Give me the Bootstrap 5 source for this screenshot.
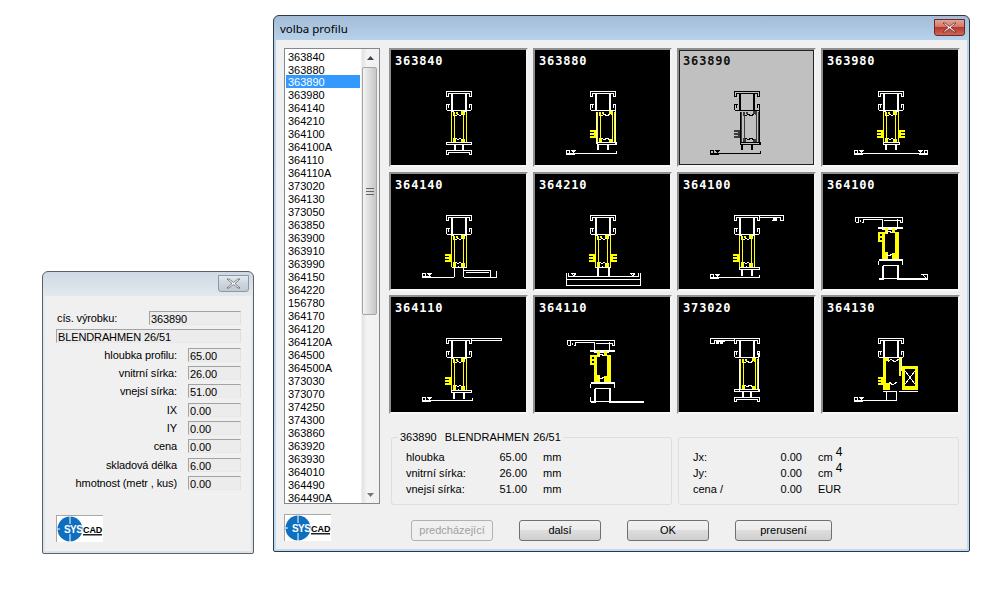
<!DOCTYPE html>
<html lang="cs">
<head>
<meta charset="utf-8">
<title>volba profilu</title>
<link href="https://cdn.jsdelivr.net/npm/bootstrap@5.3.0/dist/css/bootstrap.min.css" rel="stylesheet">
<style>
html,body{margin:0;background:#fff;}
body{width:984px;height:592px;overflow:hidden;position:relative;font:11px/13px "Liberation Sans",Arial,sans-serif;color:#000;}
.dlg{position:absolute;display:flex;flex-direction:column;border:1px solid #2b3a45;border-radius:6px 6px 2px 2px;padding:0 2px 2px;background:linear-gradient(#a3bdd8,#b8d2ec 25px,#c0daf2);}
.dlg-main{left:273px;top:15px;width:697px;height:537px;}
.dlg-side{left:42px;top:271px;width:212px;height:283px;border-color:#5c6165;background:linear-gradient(#cfd9e3,#e3e9ef 25px,#dbe2e8);}
.dlg-title{height:24px;display:flex;align-items:center;justify-content:space-between;padding:2px 2px 2px 4px;font:11.5px "Noto Sans",sans-serif;flex:none;}
.close-x{width:31px;height:17px;border:1px solid #6d2a25;border-radius:0 0 3px 3px;display:flex;align-items:center;justify-content:center;background:linear-gradient(#e0a497,#d3786b 45%,#b8392c 50%,#c9675c);margin-top:-2px;}
.dlg-side .close-x{border-color:#8d98a3;background:linear-gradient(#e4e9ee,#ced5dc 50%,#c2cad2);}
.dlg-body{flex:1;background:#f0f0f0;min-height:0;}
.main-body{padding:8px;display:flex;flex-direction:column;}
.list-row{display:flex;gap:9px;}
.prof-list{width:96px;height:456px;border:1px solid #828790;background:#fff;display:flex;overflow:hidden;flex:none;}
.prof-items{flex:1;padding:1px 1px 0;min-width:0;display:block;border-radius:0;height:454px;overflow:hidden;}
.prof-items .list-group-item{padding:0 0 0 2px;border:0;height:13px;line-height:14px;font-size:11px;color:#000;border-radius:0;background:transparent;flex:none;}
.prof-items .list-group-item.active{background:#3399ff;color:#fff;}
.sbar{width:18px;flex:none;display:flex;flex-direction:column;background:linear-gradient(90deg,#e3e3e3,#f4f4f4 30%,#f0f0f0);border-left:1px solid #f0f0f0;}
.sbar-btn{height:17px;display:flex;align-items:center;justify-content:center;flex:none;}
.sbar-thumb{height:248px;margin:1px 2px 0 0;flex:none;border:1px solid #a5a5a5;border-radius:2px;background:linear-gradient(90deg,#f4f4f4,#dcdcdc 50%,#c6c6c6);display:flex;align-items:center;justify-content:center;}
.sbar-fill{flex:1;}
.thumbs{display:grid;grid-template-columns:repeat(4,139px);grid-template-rows:120px 119px 119px;column-gap:5px;row-gap:4px;align-items:start;width:571px;}
.thumb{position:relative;height:119px;background:#000;border:2px solid;border-color:#8f8f8f #f4f4f4 #f8f8f8 #8f8f8f;}
.thumb svg{display:block;width:135px;height:115px;}
.thumb-no{position:absolute;left:4px;top:4px;color:#fff;font:bold 12px/14px "DejaVu Sans Mono",monospace;letter-spacing:.85px;}
.thumb-sel{background:#c0c0c0;box-shadow:inset 0 0 0 1px #222;--wc:#000;--yc:#3c3c3c;}
.thumb-sel .thumb-no{color:#111;}
.ln{fill:none;stroke:var(--wc,#fff);stroke-width:1;shape-rendering:crispEdges;}
.ln2{fill:none;stroke:var(--wc,#fff);stroke-width:2;shape-rendering:crispEdges;}
.yl{fill:none;stroke:var(--yc,#ff0);stroke-width:1;shape-rendering:crispEdges;}
.yf{fill:var(--yc,#ff0);stroke:none;shape-rendering:crispEdges;}
.wf{fill:var(--wc,#fff);stroke:none;shape-rendering:crispEdges;}
.panels{display:grid;grid-template-columns:281px 281px;column-gap:6px;margin:17px 0 0 2px;align-items:start;}
.gbox{margin:0;min-width:0;border:1px solid #d9dfe3;border-radius:3px;padding:0;height:74px;}
.gbox legend{float:none;width:auto;font-size:11px;line-height:13px;margin:0 0 0 6px;padding:0 2px;word-spacing:1px;}
.gbox-empty{margin-top:6px;height:68px;padding-top:7px;}
.gbox-rows{display:grid;grid-auto-rows:16px;align-items:center;padding:5px 0 0 14px;}
.rows-a{grid-template-columns:70px 51px 1fr;}
.rows-b{grid-template-columns:70px 39px 1fr;}
.gbox-empty .gbox-rows{padding-top:4px;}
.num{text-align:right;}
.unit{padding-left:16px;}
.exp{vertical-align:5px;line-height:0;margin-left:3px;font-size:12px;}
.foot{display:flex;align-items:flex-start;margin-top:9px;}
.logo{display:block;width:47px;height:27px;flex:none;background:#fff;border-top:1px solid #a8a8a8;border-left:1px solid #a8a8a8;}
.foot-btns{display:flex;gap:26px;margin:6px 0 0 80px;}
.foot-btns .btn{width:82px;height:21px;padding:0;border-radius:3px;border:1px solid #707070;font-size:11px;line-height:19px;color:#000;background:linear-gradient(#f2f2f2,#ebebeb 48%,#dddddd 50%,#cfcfcf);}
.foot-btns .btn.btn-wide{width:97px;}
.foot-btns .btn.disabled{opacity:1;color:#a0a0a0;border-color:#adb2b5;background:#f0f0f0;}
.side-body{padding:15px 10px 0 11px;display:flex;flex-direction:column;gap:4.33px;letter-spacing:-.12px;}
.frow{display:flex;justify-content:flex-end;align-items:center;height:14px;gap:11px;}
.frow span{padding-top:1px;}
.frow-first{justify-content:space-between;gap:0;padding-left:1px;}
.fval{height:14px;line-height:14px;width:53px;padding-left:1px;border:1px solid;border-color:#a3a3a3 #e0e0e0 #e8e8e8 #a3a3a3;background:#ececec;white-space:nowrap;flex:none;}
.fval-mid{width:92px;}
.fval-full{width:185px;}
.side-logo{margin-top:21px;}
</style>
</head>
<body>
<svg width="0" height="0" class="d-block" aria-hidden="true">
<defs>
<g id="pt">
<path class="ln" d="M-12.5 5.5V.5H12.5V5.5H10.5V2.5H-10.5V5.5Z"/>
<path class="ln2" d="M-7 3V19M7 3V19"/>
<path class="ln" d="M-8 19.5H8M-9.5 13.5H-12.5V18.5L-11 19.5H-8M-10.500 14V17M9.500 13.500H12.500V18.500L11 19.500H8M10.500 14V17"/>
</g>
<g id="pc">
<path class="yl" d="M-7.500 21V52M-4.500 24V49M7.500 21V52M4.500 24V49"/>
<path class="yf" d="M-6 21h2v4h-2zM-3 21h2v2h-2zM2 20h4v4h-2v-1h-2zM-6 47h3v5h-3zM2 48h4v4h-4z"/>
<path class="ln" d="M-8 20.500H-5M5 20.500H8M-3.500 25L-1 23L1 25L3.500 23M-3.500 47L-1 49L1 47L3.500 49M-1 50.500V52"/>
</g>
<g id="pw">
<path class="yl" d="M-8.500 21V52M-5.500 24V49M8.500 21V52M6.500 24V49"/>
<path class="yf" d="M-7 21h2v4h-2zM-4 21h2v2h-2zM3 20h4v4h-2v-1h-2zM-7 47h3v5h-3zM3 48h4v4h-4z"/>
<path class="ln" d="M-9.500 20.500V52.500M9.500 14.500V52.500M-4.500 25L-2 23L1 25L4 23M-4.500 47L-2 49L1 47L4 49"/>
</g>
<path id="tl" class="yf" d="M-6 0h6v8h-6v-2h4v-1h-4v-2h4v-1h-4z"/>
<path id="tr" class="yf" d="M0 0h6v2h-4v1h4v2h-4v1h4v2h-6z"/>
<g id="pb">
<path class="ln" d="M-12.500 51.500H12.500V53.500H-12.500ZM-4.500 54V59M-3.500 54V59M4.500 54V59M3.500 54V59M-12.500 63V59.500H12.500V63H10.500V61.500H-10.500V63Z"/>
</g>
<g id="hl">
<path class="ln" d="M.5 4.500V.5H3.500V2.500M.5 4.500H9"/>
<path class="wf" d="M5 0h5l-2 3h-1z"/>
<path class="ln" d="M.5 3.500H9"/>
</g>
<g id="fl">
<path class="ln" d="M855.500 222V217.500H902.500V222H900V220H884M855.500 222H858V218M860 220V222M861.500 222H863V219H882.500V227M897.500 219V227M877.500 227.500H902.500M877.500 228.500H902.500M882 229.500H897"/>
<path class="yf" d="M882 232h3v27h-3zM895 232h4v27h-4zM885 228h3v6h-3zM892 228h3v5h-3zM885 252h3v7h-3zM892 253h4v6h-4zM878 232h4v2h-2v2h2v2h-2v2h2v2h-4z"/>
<path class="ln" d="M886 233L889 231L892 233M886 254L889 256L892 254M878.500 259.500H902.500M878.500 260.500H902.500M878.500 261V265M902.500 261V265M882.500 265.500H898.500"/>
</g>
<g id="logo">
<circle cx="13" cy="13" r="12.500" fill="#0f6fbf"/>
<path d="M13 0V8M13 18V26M0 13H3" stroke="#fff" stroke-width="1"/>
<text x="7" y="17" fill="#fff" font-family="Liberation Sans" font-weight="700" font-size="10" letter-spacing="-.6">SYS</text>
<text x="26" y="16.500" fill="#000" font-family="Liberation Sans" font-weight="700" font-size="9">CAD</text>
<rect x="26" y="18" width="19" height="1.500" fill="#222"/>
</g>
</defs>
</svg>

<div class="dlg dlg-side">
  <div class="dlg-title justify-content-end">
    <div class="close-x"><svg width="16" height="11" viewBox="0 0 16 11"><path d="M3 1l4.500 3.500L12 1h2L9 5.500l5 4.500h-2L7.500 6.500 3 10H1l5-4.500L1 1z" fill="#fff" stroke="#5d6770" stroke-width=".8"/></svg></div>
  </div>
  <div class="dlg-body side-body">
    <div class="frow frow-first"><span>cís. výrobku:</span><div class="fval fval-mid">363890</div></div>
    <div class="frow"><div class="fval fval-full">BLENDRAHMEN 26/51</div></div>
    <div class="frow"><span>hloubka profilu:</span><div class="fval">65.00</div></div>
    <div class="frow"><span>vnitrní sírka:</span><div class="fval">26.00</div></div>
    <div class="frow"><span>vnejsí sírka:</span><div class="fval">51.00</div></div>
    <div class="frow"><span>IX</span><div class="fval">0.00</div></div>
    <div class="frow"><span>IY</span><div class="fval">0.00</div></div>
    <div class="frow"><span>cena</span><div class="fval">0.00</div></div>
    <div class="frow"><span>skladová délka</span><div class="fval">6.00</div></div>
    <div class="frow"><span>hmotnost (metr , kus)</span><div class="fval">0.00</div></div>
    <svg class="logo side-logo" viewBox="0 0 46 26"><use href="#logo"/></svg>
  </div>
</div>

<div class="dlg dlg-main">
  <div class="dlg-title">
    <span>volba profilu</span>
    <div class="close-x"><svg width="16" height="11" viewBox="0 0 16 11"><path d="M3 1l4.500 3.500L12 1h2L9 5.500l5 4.500h-2L7.500 6.500 3 10H1l5-4.500L1 1z" fill="#fff" stroke="#6d2a25" stroke-width=".8"/></svg></div>
  </div>
  <div class="dlg-body main-body">
    <div class="list-row">
      <div class="prof-list">
        <ul class="list-group prof-items">
          <li class="list-group-item">363840</li><li class="list-group-item">363880</li><li class="list-group-item active">363890</li><li class="list-group-item">363980</li><li class="list-group-item">364140</li><li class="list-group-item">364210</li><li class="list-group-item">364100</li><li class="list-group-item">364100A</li><li class="list-group-item">364110</li><li class="list-group-item">364110A</li><li class="list-group-item">373020</li><li class="list-group-item">364130</li><li class="list-group-item">373050</li><li class="list-group-item">363850</li><li class="list-group-item">363900</li><li class="list-group-item">363910</li><li class="list-group-item">363990</li><li class="list-group-item">364150</li><li class="list-group-item">364220</li><li class="list-group-item">156780</li><li class="list-group-item">364170</li><li class="list-group-item">364120</li><li class="list-group-item">364120A</li><li class="list-group-item">364500</li><li class="list-group-item">364500A</li><li class="list-group-item">373030</li><li class="list-group-item">373070</li><li class="list-group-item">374250</li><li class="list-group-item">374300</li><li class="list-group-item">363860</li><li class="list-group-item">363920</li><li class="list-group-item">363930</li><li class="list-group-item">364010</li><li class="list-group-item">364490</li><li class="list-group-item">364490A</li>
        </ul>
        <div class="sbar">
          <div class="sbar-btn"><svg width="7" height="4" viewBox="0 0 7 4"><path d="M3.500 0L7 4H0z" fill="#444"/></svg></div>
          <div class="sbar-thumb"><svg width="8" height="7" viewBox="0 0 8 7"><path d="M0 .5H8M0 3.500H8M0 6.500H8" stroke="#666"/></svg></div>
          <div class="sbar-fill"></div>
          <div class="sbar-btn"><svg width="7" height="4" viewBox="0 0 7 4"><path d="M0 0H7L3.500 4z" fill="#777"/></svg></div>
        </div>
      </div>
      <div>
        <div class="thumbs">
          <div class="thumb"><span class="thumb-no">363840</span><svg viewBox="391 50 135 115"><use href="#pt" x="459" y="91"/><use href="#pc" x="459" y="91"/><use href="#pb" x="459" y="91"/></svg></div>
          <div class="thumb"><span class="thumb-no">363880</span><svg viewBox="535 50 135 115"><use href="#pt" x="603" y="91"/><use href="#pw" x="606" y="91"/><use href="#tl" x="596" y="130"/><path class="ln" d="M597 142.500H616.500V144.500H597ZM597.500 145V150M598.500 145V150M607.500 145V150M608.500 145V150M574 153.500H616.500V151"/><use href="#hl" x="566" y="150"/></svg></div>
          <div class="thumb thumb-sel"><span class="thumb-no">363890</span><svg viewBox="679 50 135 115"><use href="#pt" x="747" y="91"/><use href="#pw" x="750" y="91"/><use href="#tl" x="740" y="130"/><path class="ln" d="M740 142.500H760.500V144.500H740ZM741.500 145V150M742.500 145V150M751.500 145V150M752.500 145V150M718 153.500H760.500V151"/><use href="#hl" x="710" y="150"/></svg></div>
          <div class="thumb"><span class="thumb-no">363980</span><svg viewBox="823 50 135 115"><use href="#pt" x="891" y="91"/><use href="#pc" x="891" y="91"/><use href="#tl" x="883" y="130"/><use href="#tr" x="899" y="130"/><path class="ln" d="M883 142.500H899.500V144.500H883ZM885.500 145V150M886.500 145V150M895.500 145V150M896.500 145V150M862 153.500H920"/><use href="#hl" x="854" y="150"/><use href="#hl" transform="translate(928 150) scale(-1 1)"/></svg></div>

          <div class="thumb"><span class="thumb-no">364140</span><svg viewBox="391 174 135 115"><use href="#pt" x="459" y="215"/><use href="#pc" x="459" y="215"/><use href="#tl" x="451" y="254"/><path class="ln" d="M452 267.500H467M454.500 268V276.500M463.500 268V277M430 277.500H454M463.500 270.500H490.500V277.500H463.500M465.500 272.500H488.500M490 277.500H496.500V270.500"/><use href="#hl" x="422" y="273"/></svg></div>
          <div class="thumb"><span class="thumb-no">364210</span><svg viewBox="535 174 135 115"><use href="#pt" x="603" y="215"/><use href="#pc" x="603" y="215"/><use href="#tl" x="595" y="254"/><use href="#tr" x="611" y="254"/><path class="ln" d="M595 267.500H611M597.500 268V276M598.500 268V276M608.500 268V276M609.500 268V276M566.500 273V285.500H640.500V273M568 276.500H639M566.500 279.500H640.500M568 273V276M638 273V276M571 273h5l-2 3zM630 273h5l-2 3z"/></svg></div>
          <div class="thumb"><span class="thumb-no">364100</span><svg viewBox="679 174 135 115"><use href="#pt" x="747" y="215"/><path class="ln" d="M760 215.500H783.500V220H780V217.500H760M772 220h4"/><path class="wf" d="M773 218h4v3h-4z"/><use href="#pc" x="747" y="215"/><use href="#tl" x="739" y="254"/><path class="ln" d="M739 267.500H759.500V269.500H739ZM741.500 270V276M742.500 270V276M751.500 270V276M752.500 270V276M718 277.500H759.500V275"/><use href="#hl" x="710" y="274"/></svg></div>
          <div class="thumb"><span class="thumb-no">364100</span><svg viewBox="823 174 135 115"><use href="#fl"/><path class="ln" d="M882.500 266V278M883.500 266V278M897.500 266V278M898.500 266V278M878.500 278.500H927M878.500 279.500H884M897 279.500H927M921 274.500h6.500V279.500M923 275l3 3"/></svg></div>

          <div class="thumb"><span class="thumb-no">364110</span><svg viewBox="391 297 135 115"><use href="#pt" x="459" y="338"/><path class="ln" d="M472 338.500H501.500V340.500H472"/><use href="#pc" x="459" y="338"/><use href="#tl" x="451" y="377"/><path class="ln" d="M451 390.500H471.500V392.500H451ZM453.500 393V399M454.500 393V399M463.500 393V399M464.500 393V399M431 400.500H472.500V398"/><use href="#hl" x="422" y="397"/></svg></div>
          <div class="thumb"><span class="thumb-no">364110</span><svg viewBox="535 297 135 115"><use href="#fl" x="-288" y="123"/><path class="ln" d="M594.500 389V401M595.500 389V401M609.500 389V401M610.500 389V401M590.500 401.500H644M590.500 402.500H596M609 402.500H644M590.500 397V402"/></svg></div>
          <div class="thumb"><span class="thumb-no">373020</span><svg viewBox="679 297 135 115"><use href="#pt" x="747" y="338"/><path class="ln" d="M734 338.500H710.500V343H714V340.500H734M718 341h7"/><path class="wf" d="M716 341h3v3h-3zM720 342h3v2h-3z"/><use href="#pw" x="749" y="338"/><use href="#pb" x="747" y="338"/></svg></div>
          <div class="thumb"><span class="thumb-no">364130</span><svg viewBox="823 297 135 115"><use href="#pt" x="891" y="338"/><path class="yf" d="M883 358h3v32h-3zM899 358h2v18h-2zM878 377h5v8h-5v-2h3v-1h-3v-2h3v-1h-3zM886 358h3v3h-3zM886 383h4v7h-4zM902 366h16v3h-16zM902 366h3v24h-3zM915 366h3v24h-3zM905 386h10v4h-10z"/><path class="ln" d="M888 362L891 359L895 362L899 359M889 382L893 385L897 382M901.500 358V371M905 371L915 384M915 371L905 384M899 391.500H918M883 391.500H897M886.500 392V400M896.500 392V400M862 400.500H897"/><use href="#hl" x="854" y="397"/></svg></div>
        </div>
        <div class="panels">
          <fieldset class="gbox">
            <legend>363890&nbsp;&nbsp;BLENDRAHMEN 26/51</legend>
            <div class="gbox-rows rows-a">
              <span>hloubka</span><span class="num">65.00</span><span class="unit">mm</span>
              <span>vnitrní sírka:</span><span class="num">26.00</span><span class="unit">mm</span>
              <span>vnejsí sírka:</span><span class="num">51.00</span><span class="unit">mm</span>
            </div>
          </fieldset>
          <div class="gbox gbox-empty">
            <div class="gbox-rows rows-b">
              <span>Jx:</span><span class="num">0.00</span><span class="unit">cm<span class="exp">4</span></span>
              <span>Jy:</span><span class="num">0.00</span><span class="unit">cm<span class="exp">4</span></span>
              <span>cena /</span><span class="num">0.00</span><span class="unit">EUR</span>
            </div>
          </div>
        </div>
      </div>
    </div>
    <div class="foot">
      <svg class="logo" viewBox="0 0 46 26"><use href="#logo"/></svg>
      <div class="foot-btns">
        <button type="button" class="btn disabled">predcházející</button>
        <button type="button" class="btn">dalsí</button>
        <button type="button" class="btn">OK</button>
        <button type="button" class="btn btn-wide">prerusení</button>
      </div>
    </div>
  </div>
</div>
<script src="https://cdn.jsdelivr.net/npm/bootstrap@5.3.0/dist/js/bootstrap.bundle.min.js"></script>
</body>
</html>
